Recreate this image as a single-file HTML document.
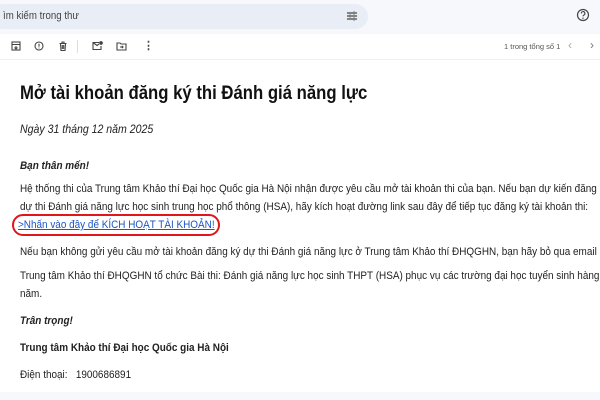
<!DOCTYPE html>
<html><head><meta charset="utf-8"><style>
*{margin:0;padding:0;box-sizing:border-box}
html,body{width:600px;height:400px;overflow:hidden}
body{background:#f6f8fc;font-family:"Liberation Sans",Arial,sans-serif;position:relative;color:#202124}
.a{position:absolute;white-space:nowrap}
.s{transform:scaleX(0.88);transform-origin:0 0}
.main{position:absolute;left:0;top:34px;width:600px;height:358px;background:#fff}
.t{font-size:11.3px;color:#222}
svg{position:absolute}
</style></head><body>
<div class="a" style="left:-10px;top:4px;width:378px;height:25px;background:#e9eef6;border-radius:13px"></div>
<div class="a s" style="left:3px;top:10px;font-size:11px;color:#444">ìm kiếm trong thư</div>
<svg style="left:346px;top:10px" width="12" height="12" viewBox="0 0 12 12" stroke="#444" stroke-width="1.3"><path d="M1 3h6M9 3h2M1 6h2M5 6h6M1 9h6M9 9h2M8 1.5v3M4 4.5v3M8 7.5v3"/></svg>
<svg style="left:576px;top:8px" width="14" height="14" viewBox="0 0 14 14"><circle cx="7" cy="7" r="5.5" fill="none" stroke="#444" stroke-width="1.2"/><path d="M5.3 5.5a1.8 1.8 0 1 1 2.4 1.6c-.6.3-.7.7-.7 1.3" fill="none" stroke="#444" stroke-width="1.1"/><circle cx="7" cy="10.2" r=".7" fill="#444"/></svg>
<div class="main"></div>
<div class="a" style="left:0;top:59px;width:600px;height:1px;background:#eceff3"></div>
<svg style="left:11px;top:41px" width="10" height="10" viewBox="0 0 10 10" stroke="#444" fill="none" stroke-width="1.1"><rect x="1" y="1" width="8" height="8"/><path d="M1 3.5h8M5 5v3M3.5 6.5 5 8l1.5-1.5"/></svg>
<svg style="left:34px;top:41px" width="10" height="10" viewBox="0 0 10 10" stroke="#444" fill="none" stroke-width="1.1"><circle cx="5" cy="5" r="4"/><path d="M5 2.8v2.8M5 6.6v.8"/></svg>
<svg style="left:58px;top:41px" width="10" height="10" viewBox="0 0 10 10" stroke="#444" fill="none" stroke-width="1.1"><path d="M1.5 2.5h7M4 2.5V1h2v1.5M2.5 2.5l.5 7h4l.5-7M4.3 4v4M5.7 4v4"/></svg>
<div class="a" style="left:77px;top:40px;width:1px;height:13px;background:#ddd"></div>
<svg style="left:92px;top:41px" width="11" height="10" viewBox="0 0 11 10" stroke="#444" fill="none" stroke-width="1.1"><path d="M7 1.5H1v7h8V5M1 1.5l4 3 2-1.5"/><circle cx="9" cy="2" r="1.3" fill="#444"/></svg>
<svg style="left:116px;top:41px" width="11" height="10" viewBox="0 0 11 10" stroke="#444" fill="none" stroke-width="1.1"><path d="M1 2h3l1 1h5v6H1zM4 6h3M6 4.8 7 6 6 7.2"/></svg>
<div class="a" style="left:143px;top:39px;font-size:11px;color:#444;font-weight:bold">⋮</div>
<div class="a" style="left:504px;top:42px;font-size:7.5px;color:#555">1 trong tổng số 1</div>
<div class="a" style="left:568px;top:38px;font-size:12px;color:#aaa">‹</div>
<div class="a" style="left:590px;top:38px;font-size:12px;color:#777">›</div>
<div class="a s" style="left:20px;top:83px;font-size:19px;font-weight:bold;color:#111">Mở tài khoản đăng ký thi Đánh giá năng lực</div>
<div class="a s" style="left:20px;top:122px;font-size:12px;font-style:italic;color:#222">Ngày 31 tháng 12 năm 2025</div>
<div class="a t s" style="left:20px;top:160px;font-weight:bold;font-style:italic">Bạn thân mến!</div>
<div class="a t s" style="left:20px;top:183px">Hệ thống thi của Trung tâm Khảo thí Đại học Quốc gia Hà Nội nhận được yêu cầu mở tài khoản thi của bạn. Nếu bạn dự kiến đăng ký</div>
<div class="a t s" style="left:20px;top:201px">dự thi Đánh giá năng lực học sinh trung học phổ thông (HSA), hãy kích hoạt đường link sau đây để tiếp tục đăng ký tài khoản thi:</div>
<div class="a t s" style="left:18px;top:219px;color:#1a56c4;text-decoration:underline">&gt;Nhấn vào đây để KÍCH HOẠT TÀI KHOẢN!</div>
<div class="a" style="left:12px;top:214px;width:208px;height:22px;border:2.5px solid #e0161b;border-radius:11px"></div>
<div class="a t s" style="left:20px;top:246px">Nếu bạn không gửi yêu cầu mở tài khoản đăng ký dự thi Đánh giá năng lực ở Trung tâm Khảo thí ĐHQGHN, bạn hãy bỏ qua email này.</div>
<div class="a t s" style="left:20px;top:270px">Trung tâm Khảo thí ĐHQGHN tổ chức Bài thi: Đánh giá năng lực học sinh THPT (HSA) phục vụ các trường đại học tuyển sinh hàng</div>
<div class="a t s" style="left:20px;top:288px">năm.</div>
<div class="a t s" style="left:20px;top:315px;font-weight:bold;font-style:italic">Trân trọng!</div>
<div class="a t s" style="left:20px;top:342px;font-weight:bold">Trung tâm Khảo thí Đại học Quốc gia Hà Nội</div>
<div class="a t s" style="left:20px;top:369px">Điện thoại:&nbsp;&nbsp; 1900686891</div>
</body></html>
